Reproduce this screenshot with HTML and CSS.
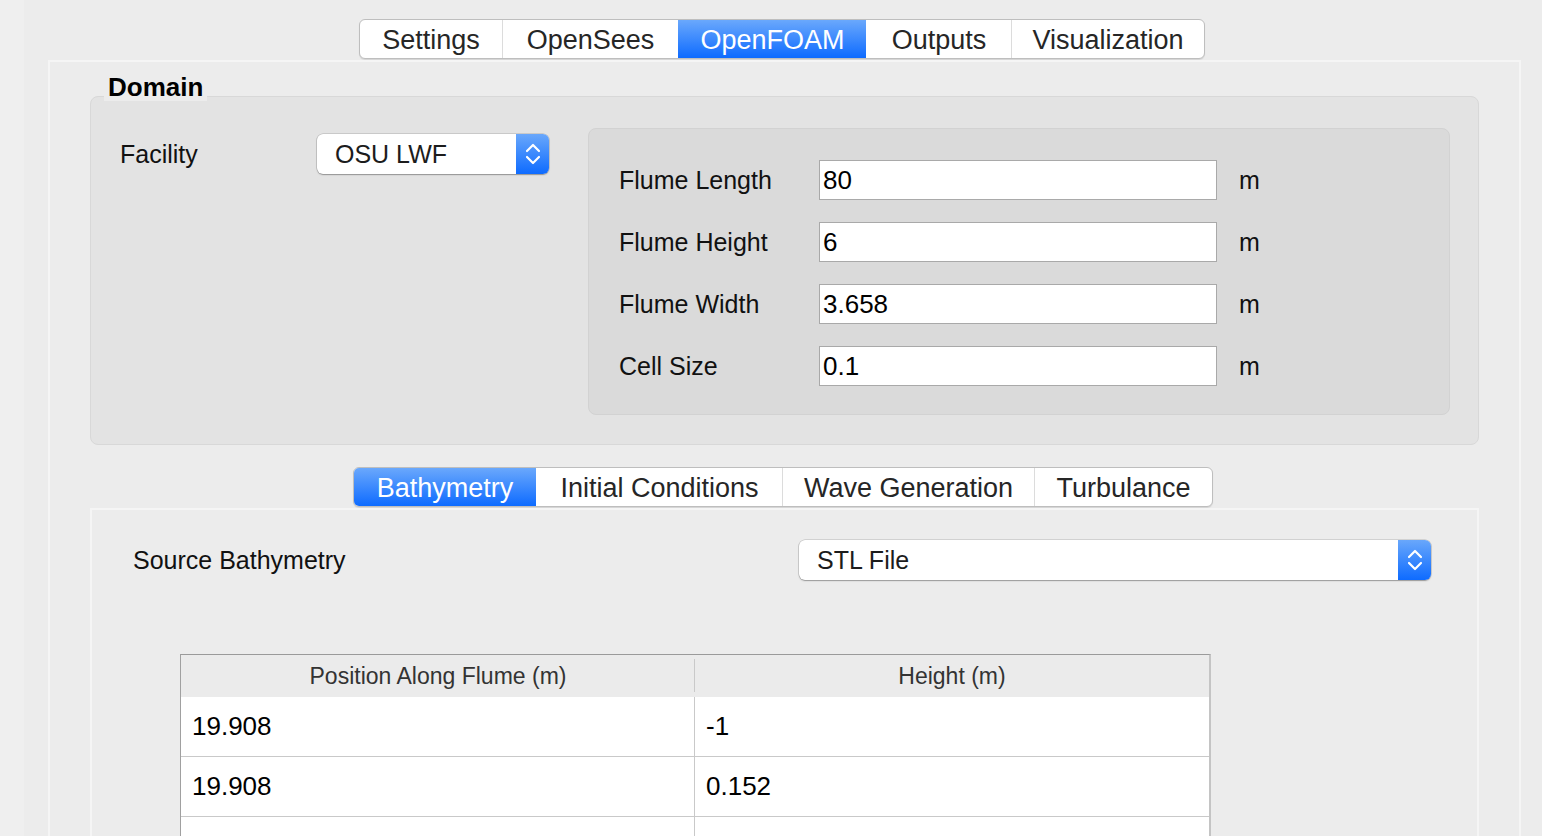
FILE: index.html
```html
<!DOCTYPE html>
<html>
<head>
<meta charset="utf-8">
<title>OpenFOAM</title>
<link rel="stylesheet" href="styles.css">
</head>
<body>
<div class="window">
  <div class="sidebar"></div>
  <div class="main">
    <div class="tabbar top-tabs">
      <div class="tab t-settings">Settings</div>
      <div class="tab t-opensees">OpenSees</div>
      <div class="tab t-openfoam active">OpenFOAM</div>
      <div class="tab t-outputs">Outputs</div>
      <div class="tab t-vis">Visualization</div>
    </div>
    <div class="pane outer-pane">
      <div class="group-title">Domain</div>
      <div class="group">
        <div class="facility">
          <span class="label facility-label">Facility</span>
          <div class="combo combo-facility">
            <span class="combo-text">OSU LWF</span>
            <span class="combo-btn">
              <svg width="16" height="24" viewBox="0 0 16 24"><path d="M2 9 L8 3 L14 9 M2 15 L8 21 L14 15" fill="none" stroke="#fff" stroke-width="2.2" stroke-linecap="round" stroke-linejoin="round"/></svg>
            </span>
          </div>
        </div>
        <div class="dims">
          <div class="dim-row"><span class="label dim-label">Flume Length</span><div class="field">80</div><span class="unit">m</span></div>
          <div class="dim-row"><span class="label dim-label">Flume Height</span><div class="field">6</div><span class="unit">m</span></div>
          <div class="dim-row"><span class="label dim-label">Flume Width</span><div class="field">3.658</div><span class="unit">m</span></div>
          <div class="dim-row"><span class="label dim-label">Cell Size</span><div class="field">0.1</div><span class="unit">m</span></div>
        </div>
      </div>
      <div class="tabbar sub-tabs">
        <div class="tab s-bathy active">Bathymetry</div>
        <div class="tab s-init">Initial Conditions</div>
        <div class="tab s-wave">Wave Generation</div>
        <div class="tab s-turb">Turbulance</div>
      </div>
      <div class="pane inner-pane">
        <div class="source-row">
          <span class="label">Source Bathymetry</span>
          <div class="combo combo-source">
            <span class="combo-text">STL File</span>
            <span class="combo-btn">
              <svg width="16" height="24" viewBox="0 0 16 24"><path d="M2 9 L8 3 L14 9 M2 15 L8 21 L14 15" fill="none" stroke="#fff" stroke-width="2.2" stroke-linecap="round" stroke-linejoin="round"/></svg>
            </span>
          </div>
        </div>
        <div class="table">
          <div class="th th-first">Position Along Flume (m)</div>
          <div class="th">Height (m)</div>
          <div class="td c1">19.908</div>
          <div class="td">-1</div>
          <div class="td c1">19.908</div>
          <div class="td">0.152</div>
          <div class="td c1"></div>
          <div class="td"></div>
        </div>
      </div>
    </div>
  </div>
</div>
</body>
</html>
```

FILE: styles.css
```css
html, body {
  margin: 0;
  height: 100%;
  overflow: hidden;
}
body {
  background: #ececec;
  font-family: "Liberation Sans", Arial, sans-serif;
  color: #111;
}
.window {
  display: flex;
  height: 836px;
}
.sidebar {
  width: 24px;
  flex: none;
  background: #efefef;
}
.main {
  flex: 1;
  padding: 19px 0 0 24px;
}

/* segmented tab bars */
.tabbar {
  display: flex;
  width: max-content;
  height: 40px;
  box-sizing: border-box;
  border: 1px solid #bebebe;
  border-radius: 6px;
  background: #fff;
  overflow: hidden;
  box-shadow: 0 1px 1px rgba(0, 0, 0, 0.10);
}
.tab {
  box-sizing: border-box;
  display: flex;
  align-items: center;
  justify-content: center;
  padding-top: 2px;
  font-size: 27px;
  color: #262626;
  border-left: 1px solid #dcdcdc;
}
.tab:first-child {
  border-left: none;
}
.tab.active {
  background: linear-gradient(#6aa8fc, #0e6bff);
  color: #fff;
  border-left-color: transparent;
}
.tab.active + .tab {
  border-left-color: transparent;
}
.top-tabs {
  margin-left: 311px;
}
.t-settings { width: 142px; }
.t-opensees { width: 176px; }
.t-openfoam { width: 188px; }
.t-outputs { width: 145px; }
.t-vis { width: 193px; }

.sub-tabs {
  margin: 22px 0 0 263px;
}
.s-bathy { width: 182px; }
.s-init { width: 246px; }
.s-wave { width: 252px; }
.s-turb { width: 178px; }

/* panes */
.outer-pane {
  margin-top: 1px;
  width: 1473px;
  height: 780px;
  box-sizing: border-box;
  border: 2px solid #f5f5f5;
  border-bottom: none;
  padding: 11px 40px 0;
}
.group-title {
  position: relative;
  z-index: 1;
  width: max-content;
  height: 28px;
  margin-left: 14px;
  padding: 0 4px;
  background: #ececec;
  font-weight: bold;
  font-size: 26px;
  line-height: 28px;
  color: #000;
}
.group {
  margin-top: -5px;
  height: 349px;
  box-sizing: border-box;
  display: flex;
  align-items: stretch;
  padding: 31px 28px 29px 29px;
  background: #e3e3e3;
  border: 1px solid #d8d8d8;
  border-radius: 8px;
}
.label {
  font-size: 25px;
  color: #111;
}
.facility {
  align-self: flex-start;
  display: flex;
  align-items: center;
  width: 468px;
  height: 40px;
  margin-top: 6px;
}
.facility-label {
  width: 197px;
}
.combo {
  display: flex;
  height: 40px;
  box-sizing: border-box;
  background: #fff;
  border-radius: 6px;
  overflow: hidden;
  box-shadow: 0 0 0 0.5px rgba(0, 0, 0, 0.22), 0 1px 1.5px rgba(0, 0, 0, 0.28);
}
.combo-facility {
  width: 232px;
}
.combo-source {
  width: 632px;
}
.combo-text {
  flex: 1;
  display: flex;
  align-items: center;
  padding-left: 18px;
  font-size: 25px;
  color: #1c1c1c;
}
.combo-btn {
  width: 33px;
  display: flex;
  align-items: center;
  justify-content: center;
  background: linear-gradient(#69a7fb, #0e6bff);
}

.dims {
  flex: 1;
  display: flex;
  flex-direction: column;
  gap: 22px;
  padding: 31px 30px 0;
  background: #dadada;
  border: 1px solid #d2d2d2;
  border-radius: 8px;
  overflow: hidden;
}
.dim-row {
  display: flex;
  align-items: center;
  height: 40px;
  flex: none;
}
.dim-label {
  width: 200px;
}
.field {
  width: 398px;
  height: 40px;
  box-sizing: border-box;
  display: flex;
  align-items: center;
  padding-left: 3px;
  background: #fff;
  border: 1px solid #a9a9a9;
  font-size: 26px;
  color: #000;
}
.unit {
  margin-left: 22px;
  font-size: 25px;
  color: #111;
}

.inner-pane {
  margin-top: 1px;
  height: 400px;
  border: 2px solid #f5f5f5;
  border-bottom: none;
  padding: 30px 46px 0 41px;
}
.source-row {
  display: flex;
  align-items: center;
  justify-content: space-between;
  height: 40px;
}

.table {
  margin: 74px 0 0 47px;
  width: 1031px;
  box-sizing: border-box;
  display: grid;
  grid-template-columns: 514px 1fr;
  background: #fff;
  border-top: 1px solid #9a9a9a;
  border-left: 1px solid #a0a0a0;
  border-right: 2px solid #c4c4c4;
}
.th {
  position: relative;
  height: 42px;
  display: flex;
  align-items: center;
  justify-content: center;
  background: #ebebeb;
  font-size: 23px;
  color: #333;
}
.th-first::after {
  content: "";
  position: absolute;
  right: -1px;
  top: 4px;
  bottom: 5px;
  width: 2px;
  background: #c9c9c9;
}
.td {
  height: 60px;
  box-sizing: border-box;
  display: flex;
  align-items: center;
  padding-left: 11px;
  border-bottom: 1px solid #c9c9c9;
  font-size: 26px;
  color: #000;
}
.td.c1 {
  border-right: 1px solid #c9c9c9;
}
```
